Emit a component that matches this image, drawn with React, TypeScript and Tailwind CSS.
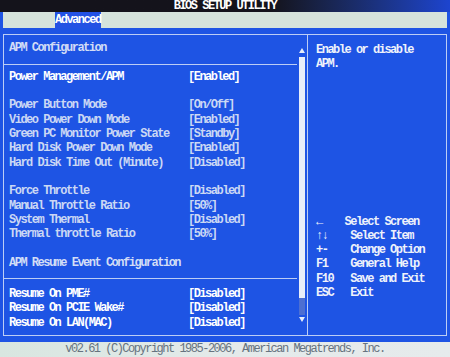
import React from "react";

type Row = { label: string; value: string; bright?: boolean } | null;

const rows: Row[] = [
  { label: "Power Management/APM", value: "[Enabled]", bright: true },
  null,
  { label: "Power Button Mode", value: "[On/Off]" },
  { label: "Video Power Down Mode", value: "[Enabled]" },
  { label: "Green PC Monitor Power State", value: "[Standby]" },
  { label: "Hard Disk Power Down Mode", value: "[Enabled]" },
  { label: "Hard Disk Time Out (Minute)", value: "[Disabled]" },
  null,
  { label: "Force Throttle", value: "[Disabled]" },
  { label: "Manual Throttle Ratio", value: "[50%]" },
  { label: "System Thermal", value: "[Disabled]" },
  { label: "Thermal throttle Ratio", value: "[50%]" },
  null,
];

const resume: Row[] = [
  { label: "Resume On PME#", value: "[Disabled]", bright: true },
  { label: "Resume On PCIE Wake#", value: "[Disabled]", bright: true },
  { label: "Resume On LAN(MAC)", value: "[Disabled]", bright: true },
];

const keys = [
  "←    Select Screen",
  "↑↓    Select Item",
  "+-    Change Option",
  "F1    General Help",
  "F10   Save and Exit",
  "ESC   Exit",
];

const Item = ({ row }: { row: Row }) => {
  if (!row) return <div className="h-[14.33px]" />;
  return (
    <div
      className={`flex h-[14.33px] leading-[14.33px] pl-[5px] whitespace-pre ${
        row.bright ? "text-white" : "text-[#cbd8f4]"
      }`}
    >
      <span className="w-[179px]">{row.label}</span>
      <span>{row.value}</span>
    </div>
  );
};

const App = () => {
  return (
    <div className="w-[450px] h-[357px] bg-[#1e54e4] flex flex-col overflow-hidden font-['Liberation_Mono',monospace] text-[12px] font-bold tracking-[-1.5px]">
      <div className="h-[12px] shrink-0 bg-linear-to-r from-[#14131b] from-60% to-[#1d44cf] text-white text-center leading-[12px]">
        BIOS SETUP UTILITY
      </div>
      <div className="px-[3px] flex flex-col">
        <div className="h-[16px] bg-[#d6e3dc] flex">
          <div className="ml-[52px] bg-[#2352e4] text-white leading-[16px]">Advanced</div>
        </div>
        <div className="mt-[6px] h-[302px] border border-[#bccdf5] flex">
          {/* left panel */}
          <div className="w-[304px] border-r border-[#bccdf5] flex">
            <div className="flex-1 pt-[6px] mr-[2px]">
              <div className="h-[14.33px] leading-[14.33px] pl-[5px] text-[#d3ddf6]">APM Configuration</div>
              <div className="mt-[8.5px] h-px bg-[#bccdf5]" />
              <div className="mt-[5px]">
                {rows.map((r, i) => (
                  <Item key={i} row={r} />
                ))}
              </div>
              <div className="h-[14.33px] leading-[14.33px] pl-[5px] text-[#d3ddf6]">
                APM Resume Event Configuration
              </div>
              <div className="mt-[7.5px] h-px bg-[#bccdf5]" />
              <div className="mt-[8px]">
                {resume.map((r, i) => (
                  <Item key={i} row={r} />
                ))}
              </div>
            </div>
            {/* scrollbar */}
            <div className="w-[6px] mr-[2px] flex flex-col items-center pt-[13px]">
              <svg width="6" height="5" viewBox="0 0 6 5">
                <polygon points="3,0 6,5 0,5" fill="#e6edf9" />
              </svg>
              <div className="mt-[4px] w-[6px] h-[241px] bg-[#e8eef9]" />
              <div className="w-[6px] h-[17px] bg-[#4d6fd2]" />
              <svg className="mt-[2px]" width="6" height="5" viewBox="0 0 6 5">
                <polygon points="0,0 6,0 3,5" fill="#e6edf9" />
              </svg>
            </div>
          </div>
          {/* right panel */}
          <div className="flex-1 flex flex-col pl-[8px] pt-[8px] pb-[35px] text-[#eef2fb]">
            <div className="leading-[14.33px]">Enable or disable</div>
            <div className="leading-[14.33px]">APM.</div>
            <div className="mt-auto">
              {keys.map((k) => (
                <div key={k} className="h-[14.2px] leading-[14.2px] whitespace-pre">
                  {k}
                </div>
              ))}
            </div>
          </div>
        </div>
      </div>
      <div className="mt-auto h-[15px] shrink-0 bg-linear-to-r from-[#d8e6e0] via-[#e4eaea] to-[#e6ebec] text-center font-normal text-[#66737f] leading-[15px] whitespace-pre">
        v02.61 (C)Copyright 1985-2006, American Megatrends, Inc.
      </div>
    </div>
  );
};

export default App;
